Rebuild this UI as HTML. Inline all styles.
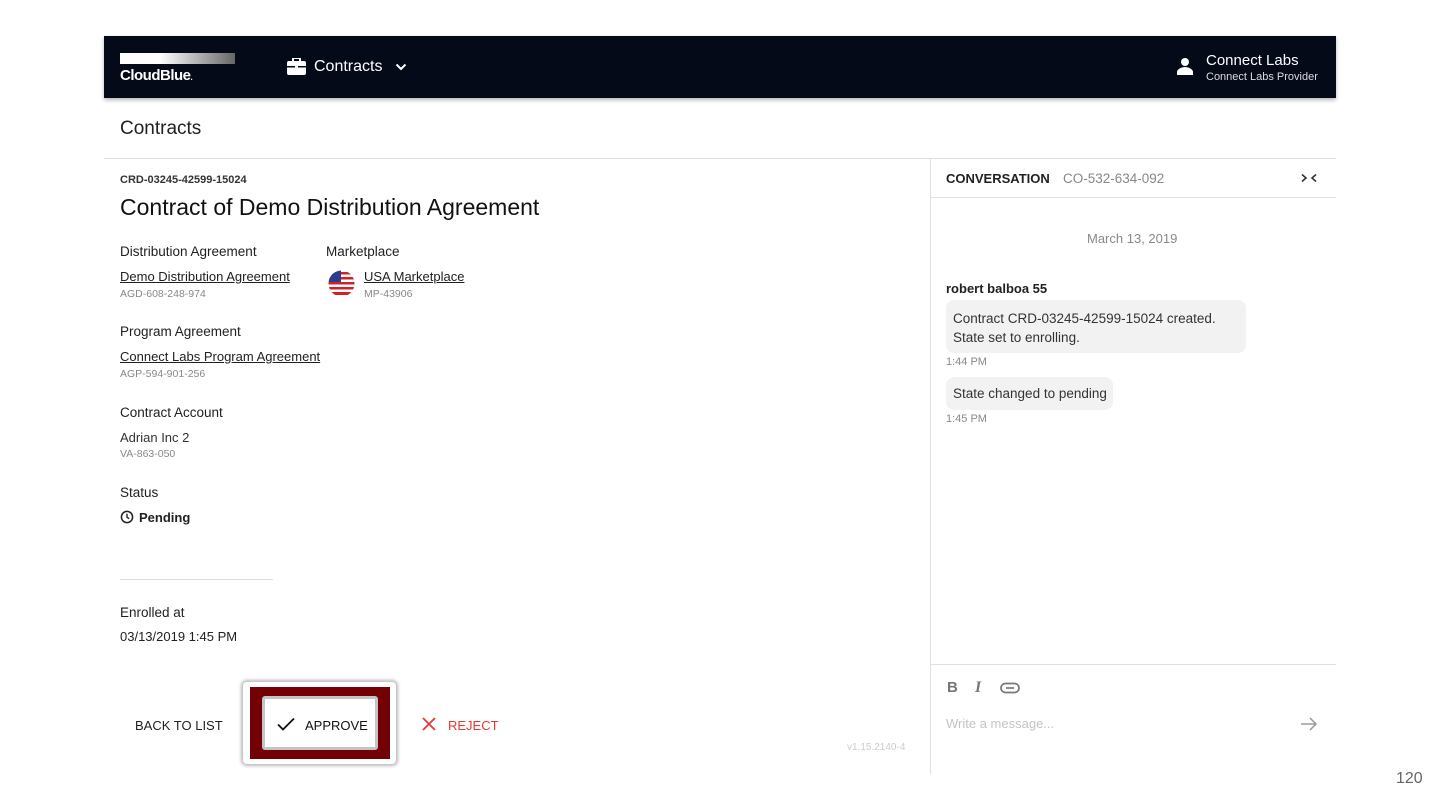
<!DOCTYPE html>
<html><head><meta charset="utf-8"><style>
*{box-sizing:border-box;margin:0;padding:0}
body{width:1440px;height:810px;background:#fff;font-family:"Liberation Sans",sans-serif;color:#212121;position:relative;overflow:hidden}
.a{position:absolute;white-space:nowrap}
.hdr{position:absolute;left:104px;top:36px;width:1232px;height:62px;background:#050a19;box-shadow:0 2px 4px rgba(0,0,0,.3)}
.lbl{font-size:13.5px;color:#212121}
.lnk{font-size:13px;color:#212121;text-decoration:underline}
.sub{font-size:10.5px;color:#888}
</style></head><body>
<div class="hdr">
 <div class="a" style="left:16px;top:17px;width:115px;height:11px;background:linear-gradient(90deg,#fff 0%,#fff 35%,#666 100%)"></div>
 <div class="a" style="left:16px;top:31px;color:#fff;font-weight:bold;font-size:15px;letter-spacing:-0.5px">CloudBlue<span style="font-size:8px">.</span></div>
 <svg class="a" style="left:183px;top:22px" width="19" height="17" viewBox="0 0 19 17"><rect x="6" y="0" width="7" height="4" rx="1" fill="none" stroke="#fff" stroke-width="2"/><rect x="0" y="3" width="19" height="14" rx="2" fill="#fff"/><rect x="0" y="8" width="19" height="1.5" fill="#050a19"/><rect x="8" y="7" width="3" height="4" fill="#fff"/></svg>
 <div class="a" style="left:210px;top:22px;color:#fff;font-size:16px">Contracts</div>
 <svg class="a" style="left:291px;top:27px" width="12" height="8" viewBox="0 0 12 8"><path d="M1.5 1.5L6 6L10.5 1.5" stroke="#fff" stroke-width="2" fill="none"/></svg>
 <svg class="a" style="left:1073px;top:21px" width="16" height="18" viewBox="0 0 16 18"><circle cx="8" cy="5" r="4" fill="#fff"/><path d="M0 18v-3c0-3 5-5 8-5s8 2 8 5v3z" fill="#fff"/></svg>
 <div class="a" style="left:1102px;top:16px;color:#fff;font-size:15px">Connect Labs</div>
 <div class="a" style="left:1102px;top:35px;color:#ddd;font-size:11px">Connect Labs Provider</div>
</div>
<div class="a" style="left:120px;top:118px;font-size:19px;color:#212121">Contracts</div>
<div class="a" style="left:104px;top:158px;width:1232px;height:1px;background:#e0e0e0"></div>
<div class="a" style="left:930px;top:158px;width:1px;height:616px;background:#e0e0e0"></div>

<div class="a" style="left:120px;top:174px;font-size:11px;font-weight:bold;color:#333">CRD-03245-42599-15024</div>
<div class="a" style="left:120px;top:194px;font-size:23px;color:#111">Contract of Demo Distribution Agreement</div>

<div class="a lbl" style="left:120px;top:244px">Distribution Agreement</div>
<div class="a lnk" style="left:120px;top:269px">Demo Distribution Agreement</div>
<div class="a sub" style="left:120px;top:288px">AGD-608-248-974</div>
<div class="a lbl" style="left:326px;top:244px">Marketplace</div>
<svg class="a" style="left:328px;top:270px" width="27" height="27" viewBox="0 0 27 27"><defs><clipPath id="c"><circle cx="13.5" cy="13.5" r="13"/></clipPath></defs><g clip-path="url(#c)"><rect width="27" height="27" fill="#fff"/><g fill="#d0202a"><rect y="2" width="27" height="2.5"/><rect y="7" width="27" height="2.5"/><rect y="12" width="27" height="2.5"/><rect y="17" width="27" height="2.5"/><rect y="22" width="27" height="3"/></g><rect width="13" height="12" fill="#2a3d8f"/></g></svg>
<div class="a lnk" style="left:364px;top:269px">USA Marketplace</div>
<div class="a sub" style="left:364px;top:288px">MP-43906</div>

<div class="a lbl" style="left:120px;top:324px">Program Agreement</div>
<div class="a lnk" style="left:120px;top:349px">Connect Labs Program Agreement</div>
<div class="a sub" style="left:120px;top:368px">AGP-594-901-256</div>

<div class="a lbl" style="left:120px;top:405px">Contract Account</div>
<div class="a" style="left:120px;top:430px;font-size:13px;color:#333">Adrian Inc 2</div>
<div class="a sub" style="left:120px;top:448px">VA-863-050</div>

<div class="a lbl" style="left:120px;top:485px">Status</div>
<svg class="a" style="left:120px;top:510px" width="14" height="14" viewBox="0 0 14 14"><circle cx="7" cy="7" r="5.6" fill="none" stroke="#212121" stroke-width="1.5"/><path d="M7 3.8V7.3L9.3 8.6" stroke="#212121" stroke-width="1.4" fill="none"/></svg>
<div class="a" style="left:139px;top:510px;font-size:13px;font-weight:bold;color:#212121">Pending</div>

<div class="a" style="left:120px;top:579px;width:153px;height:1px;background:#ddd"></div>
<div class="a lbl" style="left:120px;top:605px">Enrolled at</div>
<div class="a" style="left:120px;top:629px;font-size:13px;color:#212121">03/13/2019 1:45 PM</div>

<div class="a" style="left:135px;top:718px;font-size:13px;color:#212121">BACK TO LIST</div>
<div class="a" style="left:243px;top:682px;width:153px;height:82px;border-radius:4px;box-shadow:0 0 3px 2px #bbb"></div>
<div class="a" style="left:250px;top:687px;width:140px;height:72px;background:#720005"></div>
<div class="a" style="left:262px;top:696px;width:116px;height:54px;background:#fff;border:3px solid #c4c4c4;border-radius:3px"></div>
<svg class="a" style="left:277px;top:717px" width="18" height="14" viewBox="0 0 18 14"><path d="M1 7.5L6 12.5L17 1.5" stroke="#111" stroke-width="1.8" fill="none"/></svg>
<div class="a" style="left:305px;top:718px;font-size:13px;color:#111">APPROVE</div>
<svg class="a" style="left:422px;top:717px" width="14" height="14" viewBox="0 0 14 14"><path d="M1 1L13 13M13 1L1 13" stroke="#e53935" stroke-width="1.8"/></svg>
<div class="a" style="left:448px;top:718px;font-size:13px;color:#e53935">REJECT</div>
<div class="a" style="left:847px;top:742px;font-size:10px;color:#ccc">v1.15.2140-4</div>

<div class="a" style="left:946px;top:171px;font-size:13px;font-weight:bold;color:#212121">CONVERSATION</div>
<div class="a" style="left:1063px;top:171px;font-size:13.5px;color:#888">CO-532-634-092</div>
<svg class="a" style="left:1300px;top:173px" width="18" height="10" viewBox="0 0 18 10"><path d="M2 1.5L6 5L2 8.5M16 1.5L12 5L16 8.5" stroke="#333" stroke-width="1.6" fill="none"/></svg>
<div class="a" style="left:931px;top:197px;width:405px;height:1px;background:#e0e0e0"></div>
<div class="a" style="left:1087px;top:231px;font-size:13px;color:#888">March 13, 2019</div>
<div class="a" style="left:946px;top:281px;font-size:13px;font-weight:bold;color:#212121">robert balboa 55</div>
<div class="a" style="left:946px;top:300px;width:300px;height:53px;background:#f2f2f2;border-radius:8px"></div>
<div class="a" style="left:953px;top:309px;font-size:13.5px;color:#333;line-height:19px">Contract CRD-03245-42599-15024 created.<br>State set to enrolling.</div>
<div class="a" style="left:946px;top:356px;font-size:11px;color:#888">1:44 PM</div>
<div class="a" style="left:946px;top:377px;width:167px;height:33px;background:#f2f2f2;border-radius:8px"></div>
<div class="a" style="left:953px;top:386px;font-size:13.5px;color:#333">State changed to pending</div>
<div class="a" style="left:946px;top:413px;font-size:11px;color:#888">1:45 PM</div>

<div class="a" style="left:931px;top:664px;width:405px;height:1px;background:#e0e0e0"></div>
<div class="a" style="left:947px;top:679px;font-size:15px;font-weight:bold;color:#777">B</div>
<div class="a" style="left:975px;top:679px;font-size:16px;font-weight:bold;font-style:italic;color:#777;font-family:'Liberation Serif',serif">I</div>
<svg class="a" style="left:1000px;top:682px" width="20" height="12" viewBox="0 0 20 12"><rect x="1" y="1.5" width="18" height="9" rx="4.5" fill="none" stroke="#777" stroke-width="1.7"/><path d="M6 6H14" stroke="#777" stroke-width="1.7"/></svg>
<div class="a" style="left:946px;top:716px;font-size:13px;color:#c4c4c4">Write a message...</div>
<svg class="a" style="left:1300px;top:716px" width="18" height="16" viewBox="0 0 18 16"><path d="M1 8H16M10 2L16 8L10 14" stroke="#999" stroke-width="1.5" fill="none"/></svg>
<div class="a" style="left:1396px;top:770px;font-size:16px;color:#666">120</div>
</body></html>
